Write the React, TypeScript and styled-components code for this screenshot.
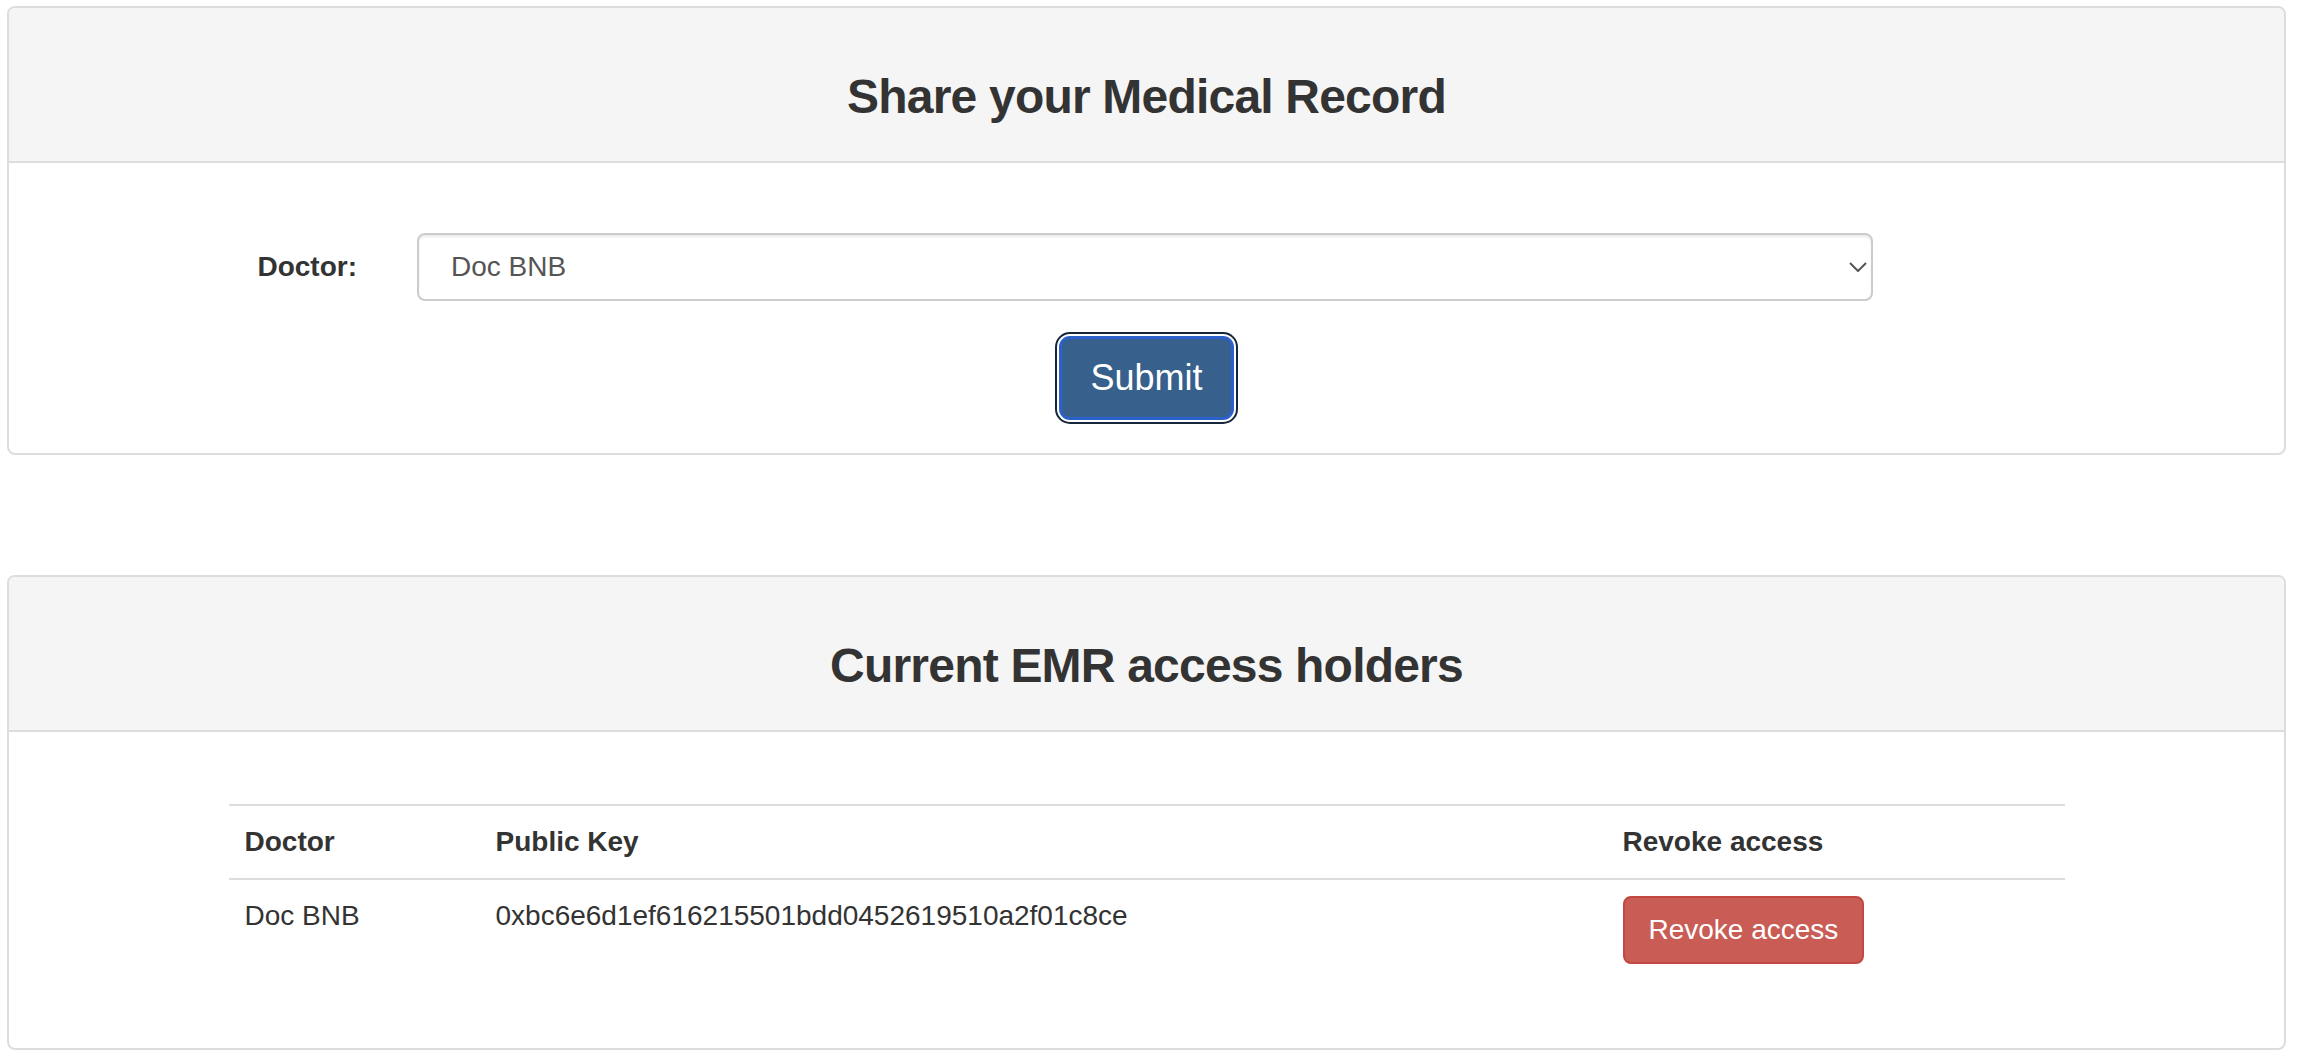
import React from 'react';
import styled, {createGlobalStyle} from "styled-components";


const holders = [
    {
        name: "Doc BNB",
        publicKey: "0xbc6e6d1ef616215501bdd0452619510a2f01c8ce"
    }
]


const GlobalStyle = createGlobalStyle`
  body {
    margin: 0;
    background: #fff;
    color: #333;
    font-family: "Liberation Sans", Arial, Helvetica, sans-serif;
    font-size: 28px;
    line-height: 40px;
  }
`


export default function App() {
    return (
        <>
            <GlobalStyle/>
            <Page>
                <Panel>
                    <PanelHeading>
                        <PanelTitle>Share your Medical Record</PanelTitle>
                    </PanelHeading>
                    <PanelBody $top={70} $bottom={33}>
                        <FormRow>
                            <Label htmlFor="doctor">Doctor:</Label>
                            <SelectWrap>
                                <Select id="doctor" defaultValue="bnb">
                                    <option value="bnb">Doc BNB</option>
                                </Select>
                                <Chevron width="18" height="10" viewBox="0 0 18 10">
                                    <polyline points="1,1 9,9 17,1" fill="none" stroke="#555" strokeWidth="2"/>
                                </Chevron>
                            </SelectWrap>
                        </FormRow>
                        <ButtonRow>
                            <SubmitButton type="button">Submit</SubmitButton>
                        </ButtonRow>
                    </PanelBody>
                </Panel>

                <Panel>
                    <PanelHeading>
                        <PanelTitle>Current EMR access holders</PanelTitle>
                    </PanelHeading>
                    <PanelBody $top={30} $bottom={30}>
                        <Table>
                            <colgroup>
                                <col style={{width: 251}}/>
                                <col style={{width: 1127}}/>
                                <col style={{width: 458}}/>
                            </colgroup>
                            <thead>
                            <tr>
                                <Th>Doctor</Th>
                                <Th>Public Key</Th>
                                <Th>Revoke access</Th>
                            </tr>
                            </thead>
                            <tbody>
                            {holders.map((h, index) => {
                                return (
                                    <tr key={index}>
                                        <Td>{h.name}</Td>
                                        <Td>{h.publicKey}</Td>
                                        <Td>
                                            <RevokeButton type="button">Revoke access</RevokeButton>
                                        </Td>
                                    </tr>
                                )
                            })}
                            </tbody>
                        </Table>
                    </PanelBody>
                </Panel>
            </Page>
        </>
    );
}

const Page = styled.div`
  display: flex;
  flex-direction: column;
  gap: 120px;
  padding: 6px 16px 0 7px;
`

const Panel = styled.section`
  border: 2px solid #dddddd;
  border-radius: 8px;
  background: #fff;
  overflow: hidden;
`

const PanelHeading = styled.div`
  background-color: #f5f5f5;
  border-bottom: 2px solid #dddddd;
  padding: 20px 30px;
`

const PanelTitle = styled.h3`
  margin: 42px 0 18px;
  font-size: 48px;
  line-height: 53px;
  font-weight: 700;
  letter-spacing: -0.8px;
  text-align: center;
  color: #333;
`

const PanelBody = styled.div<{ $top: number; $bottom: number }>`
  padding: ${p => p.$top}px 30px ${p => p.$bottom}px;
`

const FormRow = styled.div`
  display: flex;
  align-items: center;
`

const Label = styled.label`
  width: 318px;
  margin-right: 60px;
  text-align: right;
  font-weight: 700;
`

const SelectWrap = styled.div`
  position: relative;
  width: 1456px;
`

const Select = styled.select`
  appearance: none;
  display: block;
  width: 100%;
  height: 68px;
  padding: 12px 24px 12px 32px;
  border: 2px solid #cccccc;
  border-radius: 8px;
  background: #fff;
  color: #555;
  font-family: inherit;
  font-size: 28px;
  line-height: 40px;
  box-shadow: inset 0 2px 2px rgba(0, 0, 0, 0.075);
`

const Chevron = styled.svg`
  position: absolute;
  right: 6px;
  top: 29px;
  pointer-events: none;
`

const ButtonRow = styled.div`
  display: flex;
  justify-content: center;
  margin-top: 35px;
`

const SubmitButton = styled.button`
  font-family: inherit;
  font-size: 36px;
  line-height: 48px;
  padding: 15px 28px;
  color: #fff;
  background-color: #37608c;
  border: 3px solid #2c60ca;
  border-radius: 11px;
  box-shadow: 0 0 0 2px #fff, 0 0 0 4px #15263b;
  cursor: pointer;
`

const Table = styled.table`
  width: 1836px;
  table-layout: fixed;
  margin: 42px auto 38px;
  border-collapse: collapse;
  border-spacing: 0;
`

const Th = styled.th`
  padding: 16px;
  text-align: left;
  font-weight: 700;
  line-height: 40px;
  border-top: 2px solid #dddddd;
  vertical-align: bottom;
`

const Td = styled.td`
  padding: 16px;
  line-height: 40px;
  border-top: 2px solid #dddddd;
  vertical-align: top;
`

const RevokeButton = styled.button`
  display: inline-block;
  font-family: inherit;
  font-size: 28px;
  line-height: 40px;
  padding: 12px 24px;
  color: #fff;
  background-color: #c95c55;
  border: 2px solid #c2473f;
  border-radius: 8px;
  cursor: pointer;
`
